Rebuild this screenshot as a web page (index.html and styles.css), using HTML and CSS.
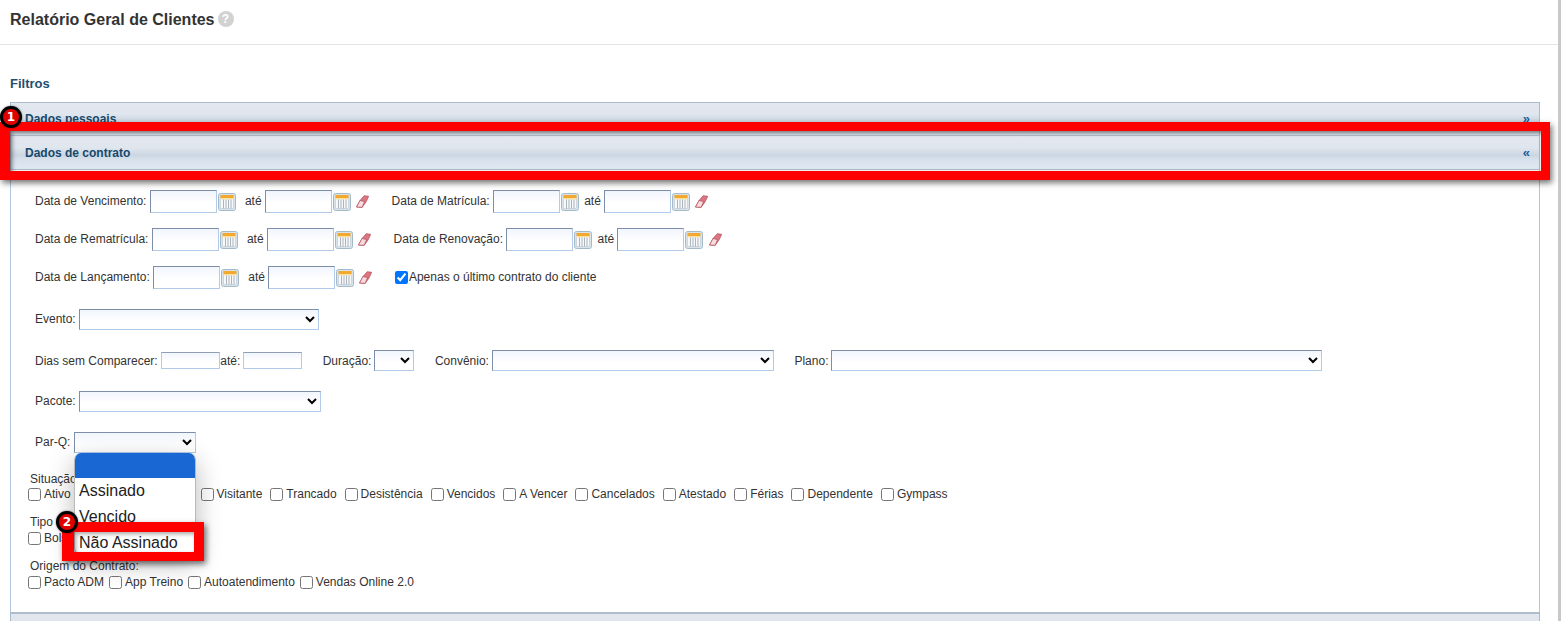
FILE: index.html
```html
<!DOCTYPE html>
<html lang="pt-BR">
<head>
<meta charset="utf-8">
<title>Relatório Geral de Clientes</title>
<link rel="stylesheet" href="styles.css">
</head>
<body>
<svg class="defs" width="0" height="0" aria-hidden="true">
  <defs>
    <symbol id="cal" viewBox="0 0 18 18">
      <rect x="0.5" y="0.5" width="17" height="17" rx="2" fill="#d9e3ec" stroke="#a5bac8"/>
      <rect x="2.5" y="2.5" width="13" height="13" fill="#f7f8fa" stroke="#bcc7d0" stroke-width="0.6"/>
      <rect x="2.5" y="2" width="13" height="3" fill="#f3a92f"/>
      <rect x="2.5" y="5" width="13" height="1.4" fill="#fbdf9f"/>
      <path d="M5.5 6.5v9M8 6.5v9M10.5 6.5v9M13 6.5v9" stroke="#aab4bd" stroke-width="1"/>
    </symbol>
    <symbol id="eraser" viewBox="0 0 13 13">
      <path d="M0.5 12 L4 5.5 L8.2 0.7 L12.7 1.3 L10 7 L6.2 12.3 Z" fill="#dc7682" stroke="#b04a58" stroke-width="0.7"/>
      <path d="M4 5.5 L8.6 6.6 L6.2 12.3 L0.5 12 Z" fill="#f7dcdf" stroke="#b04a58" stroke-width="0.7"/>
    </symbol>
  </defs>
</svg>

<header class="page-head">
  <h1 class="title">Relatório Geral de Clientes</h1>
  <span class="help">?</span>
</header>

<main class="main">
  <h2 class="filters">Filtros</h2>
  <section class="panel">
    <div class="bar"><span>Dados pessoais</span><span class="chev">»</span></div>
    <div class="bar"><span>Dados de contrato</span><span class="chev">«</span></div>
    <div class="body">

      <div class="row r-first">
        <label class="lbl">Data de Vencimento:</label>
        <input class="date" type="text">
        <svg class="cal"><use href="#cal"/></svg>
        <span class="ate">até</span>
        <input class="date" type="text">
        <svg class="cal"><use href="#cal"/></svg>
        <svg class="eraser"><use href="#eraser"/></svg>
        <label class="lbl g2">Data de Matrícula:</label>
        <input class="date" type="text">
        <svg class="cal"><use href="#cal"/></svg>
        <span class="ate tight">até</span>
        <input class="date" type="text">
        <svg class="cal"><use href="#cal"/></svg>
        <svg class="eraser"><use href="#eraser"/></svg>
      </div>

      <div class="row r-date">
        <label class="lbl">Data de Rematrícula:</label>
        <input class="date" type="text">
        <svg class="cal"><use href="#cal"/></svg>
        <span class="ate">até</span>
        <input class="date" type="text">
        <svg class="cal"><use href="#cal"/></svg>
        <svg class="eraser"><use href="#eraser"/></svg>
        <label class="lbl g2">Data de Renovação:</label>
        <input class="date" type="text">
        <svg class="cal"><use href="#cal"/></svg>
        <span class="ate tight">até</span>
        <input class="date" type="text">
        <svg class="cal"><use href="#cal"/></svg>
        <svg class="eraser"><use href="#eraser"/></svg>
      </div>

      <div class="row r-date">
        <label class="lbl">Data de Lançamento:</label>
        <input class="date" type="text">
        <svg class="cal"><use href="#cal"/></svg>
        <span class="ate">até</span>
        <input class="date" type="text">
        <svg class="cal"><use href="#cal"/></svg>
        <svg class="eraser"><use href="#eraser"/></svg>
        <label class="only-last"><input class="cb" type="checkbox" checked><span class="raised">Apenas o último contrato do cliente</span></label>
      </div>

      <div class="row r-sel">
        <label class="lbl">Evento:</label>
        <select class="sel w-evento"><option></option></select>
      </div>

      <div class="row r-sel r-days">
        <label class="lbl">Dias sem Comparecer:</label>
        <input class="days" type="text">
        <span class="ate-days">até:</span>
        <input class="days" type="text">
        <label class="lbl g3">Duração:</label>
        <select class="sel w-dur"><option></option></select>
        <label class="lbl g3">Convênio:</label>
        <select class="sel w-conv"><option></option></select>
        <label class="lbl g3">Plano:</label>
        <select class="sel w-plano"><option></option></select>
      </div>

      <div class="row r-sel">
        <label class="lbl">Pacote:</label>
        <select class="sel w-pacote"><option></option></select>
      </div>

      <div class="row r-sel">
        <label class="lbl">Par-Q:</label>
        <select class="sel w-parq"><option></option></select>
      </div>

      <div class="group g-first">
        <div class="g-title">Situação:</div>
        <div class="checks checks-wide">
          <label><input class="cb" type="checkbox">Ativo</label>
          <label><input class="cb" type="checkbox">Inativo</label>
          <label class="w-hidden"><input class="cb" type="checkbox">Normal</label>
          <label><input class="cb" type="checkbox">Visitante</label>
          <label><input class="cb" type="checkbox">Trancado</label>
          <label><input class="cb" type="checkbox">Desistência</label>
          <label><input class="cb" type="checkbox">Vencidos</label>
          <label><input class="cb" type="checkbox">A Vencer</label>
          <label><input class="cb" type="checkbox">Cancelados</label>
          <label><input class="cb" type="checkbox">Atestado</label>
          <label><input class="cb" type="checkbox">Férias</label>
          <label><input class="cb" type="checkbox">Dependente</label>
          <label><input class="cb" type="checkbox">Gympass</label>
        </div>
      </div>

      <div class="group">
        <div class="g-title">Tipo de Contrato:</div>
        <div class="checks">
          <label><input class="cb" type="checkbox">Bolsa</label>
        </div>
      </div>

      <div class="group">
        <div class="g-title">Origem do Contrato:</div>
        <div class="checks">
          <label><input class="cb" type="checkbox">Pacto ADM</label>
          <label><input class="cb" type="checkbox">App Treino</label>
          <label><input class="cb" type="checkbox">Autoatendimento</label>
          <label><input class="cb" type="checkbox">Vendas Online 2.0</label>
        </div>
      </div>
    </div>
    <div class="bar bar-last"></div>
  </section>
</main>

<div class="page-scroll"></div>

<ul class="dropdown">
  <li class="opt opt-sel"></li>
  <li class="opt">Assinado</li>
  <li class="opt">Vencido</li>
  <li class="opt">Não Assinado</li>
</ul>

<div class="mark mark-1"></div>
<div class="mark mark-2"></div>
<div class="badge badge-1">1</div>
<div class="badge badge-2">2</div>
</body>
</html>
```

FILE: styles.css
```css
* { box-sizing: border-box; }
html, body { margin: 0; padding: 0; height: 621px; overflow: hidden; background: #fff; }
body { position: relative; font: 12px/14px "Liberation Sans", Arial, sans-serif; color: #333; }
.defs { position: absolute; }

.page-head {
  height: 45px;
  padding: 11px 0 0 10px;
  display: flex;
  align-items: flex-start;
  border-bottom: 1px solid #e3e3e3;
}
.title { margin: 0; font: bold 16px/18px "Liberation Sans", Arial, sans-serif; color: #333; }
.help {
  width: 16px; height: 16px; margin: 0 0 0 3px;
  border-radius: 50%;
  background: #d2d2d2; color: #fff;
  font: bold 12px/16px "Liberation Sans", Arial, sans-serif;
  text-align: center;
}

.main { padding: 32px 21px 0 10px; }
.filters { margin: 0 0 12px; font: bold 13px/13px "Liberation Sans", Arial, sans-serif; color: #1f4e6f; }

.panel { width: 1530px; }
.bar {
  height: 34px;
  padding: 0 9px 0 14px;
  display: flex; align-items: center; justify-content: space-between;
  border: 1px solid #a9bccf;
  border-bottom-color: #b4c0cc;
  background: linear-gradient(#e3e7ee 0, #e0e6ee 35%, #ccd6e2 58%, #d8e2ec 72%, #dfe8f1 100%);
  font-weight: bold; color: #17496b;
}
.bar + .bar { border-top: 0; }
.chev { font-size: 13px; font-weight: bold; color: #135f9c; }
.bar-last { background: #e1e6ee; border-top: 2px solid #aebccc; border-bottom: 0; height: 20px; }

.body {
  height: 442px;
  padding: 20px 0 0 24px;
  border-left: 1px solid #b3c4dc;
  border-right: 1px solid #b3c4dc;
}
.row { display: flex; align-items: center; }
.r-first { height: 23px; }
.r-date { height: 23px; margin-top: 15px; }
.r-sel { height: 21px; margin-top: 20px; }

.lbl { margin-right: 3.5px; padding-bottom: 2px; white-space: nowrap; }
.r-days .lbl { padding-bottom: 0; }
.g2 { margin-left: 22.5px; }
.g3 { margin-left: 20.5px; margin-right: 3px; }
.raised { padding-bottom: 2px; }

.date, .days, .sel {
  border: 1px solid #b2cbea;
  border-top-color: #7f8ea8;
  border-left-color: #7f8ea8;
  background: linear-gradient(#f1f5fd, #fff 60%);
  border-radius: 0;
  padding: 0;
  font: 12px "Liberation Sans", Arial, sans-serif;
}
.date { width: 67px; height: 23px; }
.days { width: 59px; height: 17px; border-color: #b2cbea; border-top-color: #8f9db5; }
.sel { height: 21px; }
.cal { width: 18px; height: 18px; margin-left: 1px; flex: none; }
.eraser { width: 13px; height: 13px; margin-left: 5.5px; flex: none; }
.ate { margin: 0 3px 0 9px; padding-bottom: 2px; }
.ate.tight { margin-left: 5px; }
.ate-days { width: 23px; }

.only-last { display: flex; align-items: center; margin-left: 22.5px; }
.only-last .cb { margin-right: 1px; }

.w-evento { width: 240px; }
.w-pacote { width: 242px; }
.w-parq { width: 122px; }
.w-dur { width: 40px; }
.w-conv { width: 282px; }
.w-plano { width: 491px; }

.group { margin-left: -7px; margin-top: 14px; }
.g-first { margin-top: 19px; }
.g-title { height: 14px; margin-left: 2px; margin-bottom: 2px; white-space: nowrap; }
.g-first .g-title { margin-bottom: 1px; }
.checks { display: flex; gap: 5px; height: 14px; align-items: center; }
.checks-wide { gap: 8px; }
.checks label { display: flex; align-items: center; white-space: nowrap; }
.cb { width: 13px; height: 13px; margin: 0 3px 0 0; flex: none; }
.w-hidden { width: 54.5px; }

.page-scroll {
  position: absolute; top: 0; right: 0; bottom: 0; width: 3px; background: #c9c9c9;
}

.dropdown {
  position: absolute; left: 74px; top: 453px;
  width: 122px; height: 102px;
  margin: 0; padding: 0; list-style: none;
  background: #fff;
  border: 1px solid #b9b9b9;
  border-top: 0;
  border-radius: 7px;
  box-shadow: 0 8px 26px rgba(0,0,0,.28);
  overflow: hidden;
  font: 16px/26px "Liberation Sans", Arial, sans-serif;
  color: #222;
}
.opt { height: 26px; padding-left: 4px; white-space: nowrap; }
.opt-sel { height: 25px; background: #1967d2; }

.mark { position: absolute; border: 0 solid #f00; }
.mark-1 {
  left: 0; top: 122px; width: 1550px; height: 58px;
  border-width: 9px 9px 9px 10px;
  box-shadow: 2px 3px 6px rgba(0,0,0,.55), inset 2px 2px 4px rgba(0,0,0,.5);
}
.mark-2 {
  left: 62px; top: 522px; width: 142px; height: 39px;
  border-width: 10px 10px 9px 12px;
  box-shadow: 2px 3px 6px rgba(0,0,0,.55), inset 2px 2px 4px rgba(0,0,0,.35);
}
.badge {
  position: absolute; width: 22px; height: 22px;
  border: 3px solid #000; border-radius: 50%;
  background: #e00000; color: #fff;
  font: bold 12px/16px "DejaVu Sans", sans-serif;
  text-align: center;
  box-shadow: 0 0 2px rgba(0,0,0,.6);
}
.badge-1 { left: 0; top: 106px; }
.badge-2 { left: 56px; top: 511px; }
```
